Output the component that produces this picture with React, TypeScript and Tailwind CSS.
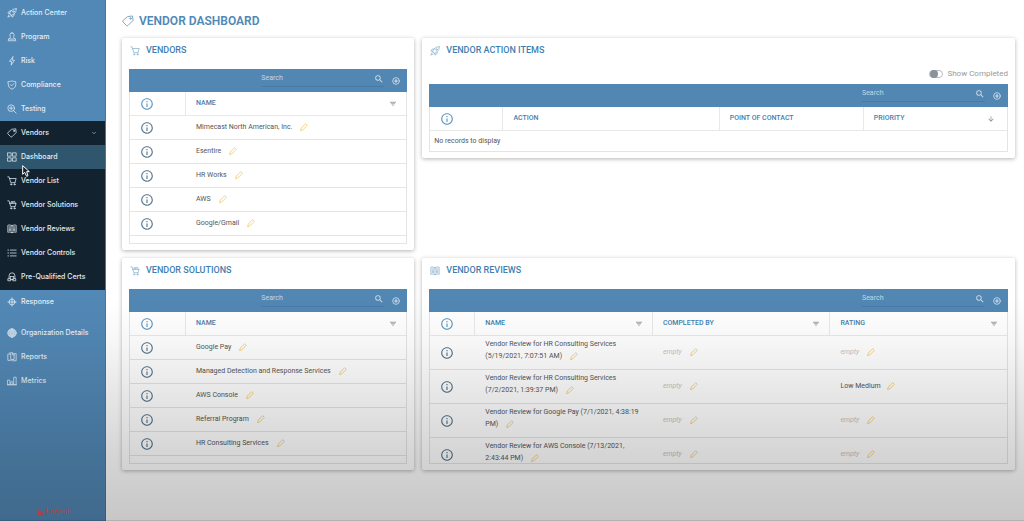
import React, { useState } from "react";
import { MdArrowDownward, MdInfoOutline, MdSearch } from "react-icons/md";
import { ChevronDown } from "lucide-react";

type IconProps = { className?: string };

function Line({ className = "size-2.5", children }: IconProps & { children: React.ReactNode }) {
    return (
        <svg
            viewBox="0 0 24 24"
            fill="none"
            stroke="currentColor"
            strokeWidth="1.8"
            strokeLinecap="round"
            strokeLinejoin="round"
            className={`shrink-0 ${className}`}
            aria-hidden="true"
        >
            {children}
        </svg>
    );
}

const RocketIcon = ({ className }: IconProps) => (
    <Line className={className}>
        <path d="M22 2c-5 0-9 1-12 5l-4 6 5 5 6-4c4-3 5-7 5-12z" />
        <path d="M10 7H6l-4 5 5 1M17 14v4l-5 4-1-5M5 16l-3 6 6-3" />
        <circle cx="15.5" cy="8.5" r="2" />
    </Line>
);

const ProgramIcon = ({ className }: IconProps) => (
    <Line className={className}>
        <path d="M12 2a5 5 0 0 1 5 5c0 3-1 4-1 6l1 3h3l1 5H3l1-5h3l1-3c0-2-1-3-1-6a5 5 0 0 1 5-5z" />
        <path d="M7 17h10" />
    </Line>
);

const BoltIcon = ({ className }: IconProps) => (
    <Line className={className}>
        <path d="M14 2 6 13h5l-1 9 8-12h-5z" />
    </Line>
);

const ShieldIcon = ({ className }: IconProps) => (
    <Line className={className}>
        <path d="M3 4c4 0 6-1 9-2 3 1 5 2 9 2v7c0 6-4 9-9 11-5-2-9-5-9-11z" />
        <path d="m8 11 3 3 5-5" />
    </Line>
);

const ZoomIcon = ({ className }: IconProps) => (
    <Line className={className}>
        <circle cx="10" cy="10" r="8" />
        <path d="m16 16 6 6M6 10h8M10 6v8" />
    </Line>
);

const TagIcon = ({ className }: IconProps) => (
    <Line className={className}>
        <path d="M12 3l9-1 1 9-10 10a2 2 0 0 1-3 0l-7-7a2 2 0 0 1 0-3z" />
        <circle cx="17" cy="7" r="1.5" />
    </Line>
);

const GridIcon = ({ className }: IconProps) => (
    <Line className={className}>
        <rect x="2" y="2" width="8" height="8" />
        <rect x="14" y="2" width="8" height="8" />
        <rect x="2" y="14" width="8" height="8" />
        <rect x="14" y="14" width="8" height="8" />
    </Line>
);

const CartIcon = ({ className }: IconProps) => (
    <Line className={className}>
        <path d="M2 2h3l4 14h10M6 6h16l-3 10" />
        <circle cx="10" cy="20" r="1.5" />
        <circle cx="18" cy="20" r="1.5" />
    </Line>
);

const CartFullIcon = ({ className }: IconProps) => (
    <Line className={className}>
        <path d="M2 2h3l4 14h10M6 8h16l-3 8M10 8V4h4v4M14 5l4-2 2 5" />
        <circle cx="10" cy="20" r="1.5" />
        <circle cx="18" cy="20" r="1.5" />
    </Line>
);

const BookIcon = ({ className }: IconProps) => (
    <Line className={className}>
        <path d="M12 4c-3-2-7-2-10-1v17c3-1 7-1 10 1 3-2 7-2 10-1V3c-3-1-7-1-10 1zM12 4v17" />
        <path d="M5 7h4M5 10h4M5 13h4M5 16h4M15 7h4M15 10h4M15 13h4M15 16h4" />
    </Line>
);

const ListIcon = ({ className }: IconProps) => (
    <Line className={className}>
        <path d="M8 5h14M8 12h14M8 19h14M2 5h2M2 12h2M2 19h2" />
    </Line>
);

const CertIcon = ({ className }: IconProps) => (
    <Line className={className}>
        <path d="M5 15V9a7 7 0 0 1 14 0v6" />
        <path d="M8 11h8M8 11v4M16 11v4M3 16h6v5H3zM15 16h6v5h-6zM9 18h6" />
    </Line>
);

const TargetIcon = ({ className }: IconProps) => (
    <Line className={className}>
        <circle cx="12" cy="12" r="7" />
        <path d="M12 2v7M12 15v7M2 12h7M15 12h7" />
        <circle cx="12" cy="12" r="1.5" />
    </Line>
);

const GlobeIcon = ({ className }: IconProps) => (
    <Line className={className}>
        <circle cx="12" cy="12" r="10" fill="currentColor" fillOpacity="0.5" />
        <path d="M2 12h20M4 7h16M4 17h16M12 2v20M12 2c-6 6-6 14 0 20M12 2c6 6 6 14 0 20" strokeWidth="1.3" />
    </Line>
);

const ReportsIcon = ({ className }: IconProps) => (
    <Line className={className}>
        <path d="M7 5H2v15h7M7 2h6l4 4v12H9V8z" />
        <path d="M17 4h5v17H12M13 2v5h4" />
    </Line>
);

const MetricsIcon = ({ className }: IconProps) => (
    <Line className={className}>
        <path d="M2 10h5v11H2zM10 14h4v7h-4zM17 3h5v18h-5zM1 21h22" />
    </Line>
);

const PencilIcon = () => (
    <Line className="size-2">
        <path d="M2 22l2-7L17 2l5 5L9 20z" strokeWidth="2.8" />
    </Line>
);

const AddIcon = () => (
    <Line className="size-2">
        <circle cx="12" cy="12" r="10" strokeWidth="2.5" />
        <path d="M12 8v8M8 12h8" strokeWidth="3.5" />
    </Line>
);

const FilterIcon = () => (
    <svg viewBox="0 0 24 24" className="mr-0.5 size-1.5" fill="#a3a3a3" aria-hidden="true">
        <path d="M0 3h24v4H0zM4 9h16v4H4zM8 15h8l-4 6z" />
    </svg>
);

const LockIcon = () => (
    <svg viewBox="0 0 24 24" className="size-2" fill="currentColor" aria-hidden="true">
        <path d="M6 10V8a6 6 0 0 1 12 0v2h2v12H4V10zm3 0h6V8a3 3 0 0 0-6 0z" />
    </svg>
);

const topLinks = [
    { label: "Action Center", Icon: RocketIcon },
    { label: "Program", Icon: ProgramIcon },
    { label: "Risk", Icon: BoltIcon },
    { label: "Compliance", Icon: ShieldIcon },
    { label: "Testing", Icon: ZoomIcon },
];

const vendorLinks = [
    { label: "Dashboard", Icon: GridIcon, active: true },
    { label: "Vendor List", Icon: CartIcon },
    { label: "Vendor Solutions", Icon: CartFullIcon },
    { label: "Vendor Reviews", Icon: BookIcon },
    { label: "Vendor Controls", Icon: ListIcon },
    { label: "Pre-Qualified Certs", Icon: CertIcon },
];

const bottomLinks = [
    { label: "Organization Details", Icon: GlobeIcon },
    { label: "Reports", Icon: ReportsIcon },
    { label: "Metrics", Icon: MetricsIcon },
];

const vendors = ["Mimecast North American, Inc.", "Esentire", "HR Works", "AWS", "Google/Gmail"];

const solutions = [
    "Google Pay",
    "Managed Detection and Response Services",
    "AWS Console",
    "Referral Program",
    "HR Consulting Services",
];

const reviews = [
    { name: "Vendor Review for HR Consulting Services (5/19/2021, 7:07:51 AM)", rating: "" },
    { name: "Vendor Review for HR Consulting Services (7/2/2021, 1:39:37 PM)", rating: "Low Medium" },
    { name: "Vendor Review for Google Pay (7/1/2021, 4:38:19 PM)", rating: "" },
    { name: "Vendor Review for AWS Console (7/13/2021, 2:43:44 PM)", rating: "" },
];

function NavLink({ label, Icon, active }: { label: string; Icon: React.FC<IconProps>; active?: boolean }) {
    return (
        <a
            href="#"
            className={`flex h-6 items-center gap-1 pl-[7px] whitespace-nowrap ${active ? "bg-[#2f566c]" : ""}`}
        >
            <Icon />
            {label}
        </a>
    );
}

function Sidebar() {
    return (
        <nav className="flex w-[106px] shrink-0 flex-col border-r border-[#47779f] bg-[#5288b5] pt-px font-['Inter',sans-serif] text-[7px] font-medium text-[#e3edf5]">
            {topLinks.map((link) => (
                <NavLink key={link.label} {...link} />
            ))}
            <div className="bg-[#13222f] pb-px">
                <button className="flex h-6 w-full items-center gap-1 pr-2 pl-[7px]">
                    <TagIcon />
                    Vendors
                    <ChevronDown className="ml-auto size-1.5" />
                </button>
                {vendorLinks.map((link) => (
                    <NavLink key={link.label} {...link} />
                ))}
            </div>
            <NavLink label="Response" Icon={TargetIcon} />
            <div className="mt-[7px]">
                {bottomLinks.map((link) => (
                    <NavLink key={link.label} {...link} />
                ))}
            </div>
            <button className="mt-auto mb-1 flex items-center justify-center gap-0.5 text-[#e0505c]">
                <LockIcon />
                Logout
            </button>
        </nav>
    );
}

function Card({
    title,
    Icon,
    className = "",
    children,
}: {
    title: string;
    Icon: React.FC<IconProps>;
    className?: string;
    children: React.ReactNode;
}) {
    return (
        <section className={`rounded-xs bg-white px-[7px] pb-1.5 shadow-[0_1px_4px_rgba(0,0,0,0.3)] ${className}`}>
            <h2 className="flex h-[26px] items-center gap-1.5 pl-px text-[9px] font-medium text-[#3f7fb0]">
                <Icon className="size-2.5 opacity-60" />
                {title}
            </h2>
            {children}
        </section>
    );
}

function Toolbar({ name }: { name: string }) {
    return (
        <div className="flex h-[23px] items-center justify-end gap-2 bg-[#5287b3] pr-[7px] text-[#d3e1ed]">
            <label className="mt-0.5 flex h-4 w-[123px] items-center self-start border-b border-[#477ba7]">
                <input
                    type="text"
                    placeholder="Search"
                    aria-label={`Search ${name}`}
                    className="w-full min-w-0 bg-transparent text-[7px] outline-none placeholder:text-[#c3d6e6]"
                />
                <MdSearch className="size-2.5 shrink-0" />
            </label>
            <button aria-label={`Add to ${name}`}>
                <AddIcon />
            </button>
        </div>
    );
}

function HeadCell({
    children,
    icon,
    className = "",
}: {
    children: React.ReactNode;
    icon?: "filter" | "sort";
    className?: string;
}) {
    return (
        <th
            className={`border-b border-l border-[#e8e8e8] pr-2 pl-2.5 text-left font-medium text-[#3f7fb0] ${className}`}
        >
            <div className="flex items-center justify-between">
                {children}
                {icon === "filter" && <FilterIcon />}
                {icon === "sort" && <MdArrowDownward className="mr-1 size-2 text-[#888]" />}
            </div>
        </th>
    );
}

function InfoHead({ className }: { className: string }) {
    return (
        <th className={`border-b border-[#e8e8e8] pl-2.5 ${className}`}>
            <MdInfoOutline className="size-3.5 text-[#5f98c2]" />
        </th>
    );
}

function InfoCell() {
    return (
        <td className="border-b border-[#e4e4e4] pl-2.5">
            <button className="block" aria-label="Details">
                <MdInfoOutline className="size-3.5 text-[#56788f]" />
            </button>
        </td>
    );
}

function EditButton({ className = "ml-2" }: IconProps) {
    return (
        <button aria-label="Edit" className={`inline-block align-middle text-[#f5cf7d] ${className}`}>
            <PencilIcon />
        </button>
    );
}

function Editable({ value }: { value: string }) {
    if (!value) {
        return (
            <td className="border-b border-[#e4e4e4] pl-[11px] text-[#c4c4c4] italic">
                empty
                <EditButton />
            </td>
        );
    }
    return (
        <td className="border-b border-[#e4e4e4] pl-[11px]">
            {value}
            <EditButton className="ml-1.5" />
        </td>
    );
}

function NameTable({ name, rows }: { name: string; rows: string[] }) {
    return (
        <div className="mt-[5px]">
            <Toolbar name={name} />
            <div className="h-[152px] overflow-hidden border border-t-0 border-[#e4e4e4]">
                <table className="w-full table-fixed border-separate border-spacing-0">
                    <thead>
                        <tr className="h-6">
                            <InfoHead className="w-[55px]" />
                            <HeadCell icon="filter">NAME</HeadCell>
                        </tr>
                    </thead>
                    <tbody>
                        {rows.map((row) => (
                            <tr key={row} className="h-6">
                                <InfoCell />
                                <td className="border-b border-[#e4e4e4] pl-[11px]">
                                    {row}
                                    <EditButton />
                                </td>
                            </tr>
                        ))}
                    </tbody>
                </table>
            </div>
        </div>
    );
}

export default function App() {
    const [showCompleted, setShowCompleted] = useState(false);

    return (
        <div className="relative flex min-h-screen bg-white font-['Roboto',sans-serif] text-[7px] text-[#555]">
            <Sidebar />

            <main className="min-w-0 flex-1 pr-[9px] pb-6 pl-4">
                <h1 className="flex h-[38px] items-center gap-[5px] pt-1 text-[12px] font-semibold text-[#4f88b5]">
                    <TagIcon className="size-3 opacity-80" />
                    VENDOR DASHBOARD
                </h1>

                <div className="grid grid-cols-3 items-start gap-2">
                    <Card title="VENDORS" Icon={CartIcon}>
                        <NameTable name="vendors" rows={vendors} />
                    </Card>

                    <Card title="VENDOR ACTION ITEMS" Icon={RocketIcon} className="col-span-2">
                        <div className="flex h-5 items-center justify-end">
                            <label className="flex items-center gap-1 text-[8px] text-[#999]">
                                <input
                                    type="checkbox"
                                    role="switch"
                                    checked={showCompleted}
                                    onChange={(e) => setShowCompleted(e.target.checked)}
                                    className="peer sr-only"
                                />
                                <span className="flex h-2 w-3.5 items-center rounded-full border border-[#bbb] peer-checked:justify-end">
                                    <span className="size-2 rounded-full bg-[#8b929b]" />
                                </span>
                                Show Completed
                            </label>
                        </div>
                        <Toolbar name="action items" />
                        <div className="border border-t-0 border-[#e4e4e4]">
                            <table className="w-full table-fixed border-separate border-spacing-0">
                                <thead>
                                    <tr className="h-6">
                                        <InfoHead className="w-1/8" />
                                        <HeadCell>ACTION</HeadCell>
                                        <HeadCell className="w-1/4">POINT OF CONTACT</HeadCell>
                                        <HeadCell className="w-1/4" icon="sort">
                                            PRIORITY
                                        </HeadCell>
                                    </tr>
                                </thead>
                                <tbody>
                                    <tr className="h-5">
                                        <td colSpan={4} className="pl-1">
                                            No records to display
                                        </td>
                                    </tr>
                                </tbody>
                            </table>
                        </div>
                    </Card>

                    <Card title="VENDOR SOLUTIONS" Icon={CartFullIcon}>
                        <NameTable name="solutions" rows={solutions} />
                    </Card>

                    <Card title="VENDOR REVIEWS" Icon={BookIcon} className="col-span-2">
                        <div className="mt-[5px]">
                            <Toolbar name="reviews" />
                            <div className="h-[152px] overflow-hidden border border-t-0 border-[#e4e4e4]">
                                <table className="w-full table-fixed border-separate border-spacing-0">
                                    <thead>
                                        <tr className="h-6">
                                            <InfoHead className="w-[44px]" />
                                            <HeadCell icon="filter">NAME</HeadCell>
                                            <HeadCell icon="filter">COMPLETED BY</HeadCell>
                                            <HeadCell icon="filter">RATING</HeadCell>
                                        </tr>
                                    </thead>
                                    <tbody>
                                        {reviews.map((review) => (
                                            <tr key={review.name} className="h-[34px]">
                                                <InfoCell />
                                                <td className="border-b border-[#e4e4e4] pt-0.5 pr-2 pl-[11px] align-top leading-3">
                                                    {review.name}
                                                    <EditButton />
                                                </td>
                                                <Editable value="" />
                                                <Editable value={review.rating} />
                                            </tr>
                                        ))}
                                    </tbody>
                                </table>
                            </div>
                        </div>
                    </Card>
                </div>
            </main>

            {/* mouse pointer */}
            <svg viewBox="0 0 12 18" className="absolute top-[165px] left-[22px] h-3 w-2" aria-hidden="true">
                <path d="M1 1v13l3-3 3 6 2-1-2-6h4z" fill="#13222f" stroke="#fff" strokeWidth="1.5" />
            </svg>

            {/* bottom shade */}
            <div className="pointer-events-none absolute inset-x-0 bottom-0 h-[221px] border-b border-black/30 bg-[linear-gradient(to_bottom,transparent,rgba(0,0,0,0.03)_18%,rgba(0,0,0,0.1)_45%,rgba(0,0,0,0.17)_72%,rgba(0,0,0,0.22))]" />
        </div>
    );
}
